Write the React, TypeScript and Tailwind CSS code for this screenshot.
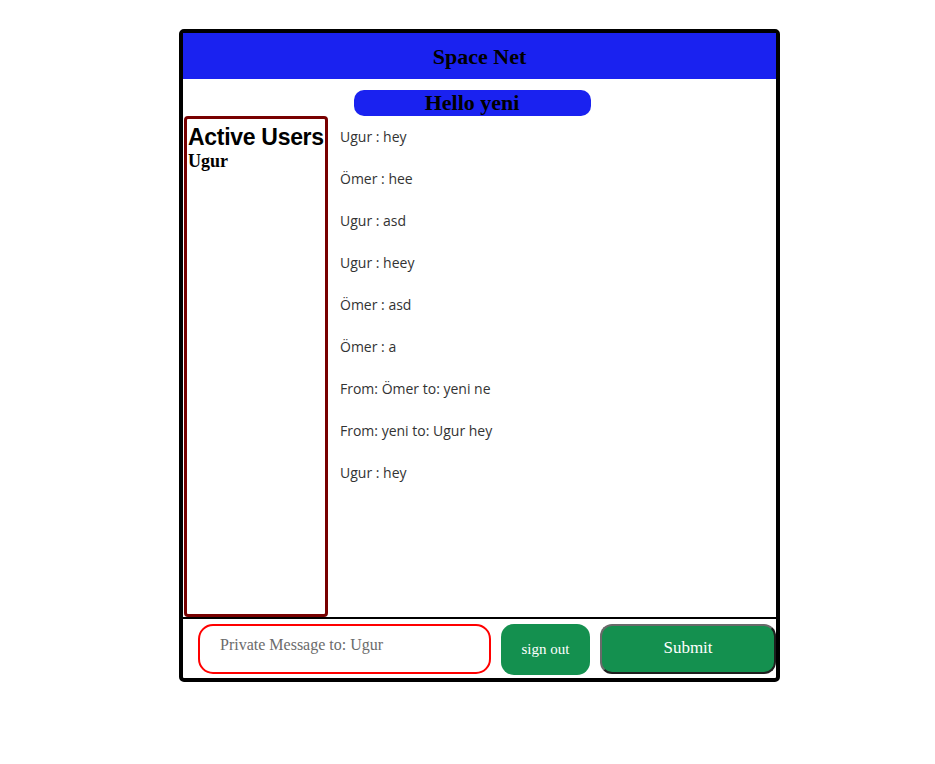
const messages = [
  'Ugur : hey',
  'Ömer : hee',
  'Ugur : asd',
  'Ugur : heey',
  'Ömer : asd',
  'Ömer : a',
  'From: Ömer to: yeni ne',
  'From: yeni to: Ugur hey',
  'Ugur : hey',
];

export default function App() {
  return (
    <div className="min-h-[764px] w-full bg-white pl-[179px] pt-[29px]">
      <div className="flex h-[653px] w-[601px] flex-col rounded-[5px] border-4 border-black">
        {/* header */}
        <div className="flex h-[46px] items-center justify-center bg-[#1a22f0]">
          <h1 className="font-['Liberation_Serif',serif] text-[22px] font-bold text-black">Space Net</h1>
        </div>

        <div className="flex justify-center pt-[11px] pr-[15px]">
          <div className="flex h-[26px] w-[237px] items-center justify-center rounded-[10px] bg-[#1a22f0]">
            <span className="font-['Liberation_Serif',serif] text-[22px] font-bold leading-none text-black">Hello yeni</span>
          </div>
        </div>

        <div className="flex min-h-0 flex-1">
          {/* active users */}
          <div className="ml-px w-[144px] rounded-[4px] border-[3px] border-[#780000] pl-px pt-[4px]">
            <h2 className="font-['Liberation_Sans',sans-serif] text-[23px] font-bold leading-[28px] tracking-[-0.3px] text-black">
              Active Users
            </h2>
            <div className="font-['Liberation_Serif',serif] text-[18px] font-bold leading-[20px] text-black">Ugur</div>
          </div>

          {/* messages */}
          <div className="flex flex-col gap-[22px] pl-[12px] pt-[11px] font-['Open_Sans',sans-serif] text-[14px] leading-[20px] text-[#333]">
            {messages.map((m, i) => (
              <p key={i}>{m}</p>
            ))}
          </div>
        </div>

        {/* bottom bar */}
        <div className="flex h-[61px] items-start gap-[10px] border-t-2 border-black pl-[15px] pt-[5px]">
          <div className="flex h-[50px] w-[293px] items-start rounded-[15px] border-2 border-[#ff0000] pl-[20px] pt-[7px]">
            <span className="font-['Liberation_Serif',serif] text-[16px] text-[#6b6b6b]">Private Message to: Ugur</span>
          </div>
          <button className="flex h-[51px] w-[89px] items-center justify-center rounded-[13px] bg-[#14904f] font-['Liberation_Serif',serif] text-[15px] text-white">
            sign out
          </button>
          <button className="flex h-[50px] w-[176px] items-center justify-center rounded-[12px] border-2 border-[#6a6a6a] border-b-[#1e1e1e] border-r-[#1e1e1e] bg-[#14904f] pb-[2px] font-['Liberation_Serif',serif] text-[17px] text-white">
            Submit
          </button>
        </div>
      </div>
    </div>
  );
}
